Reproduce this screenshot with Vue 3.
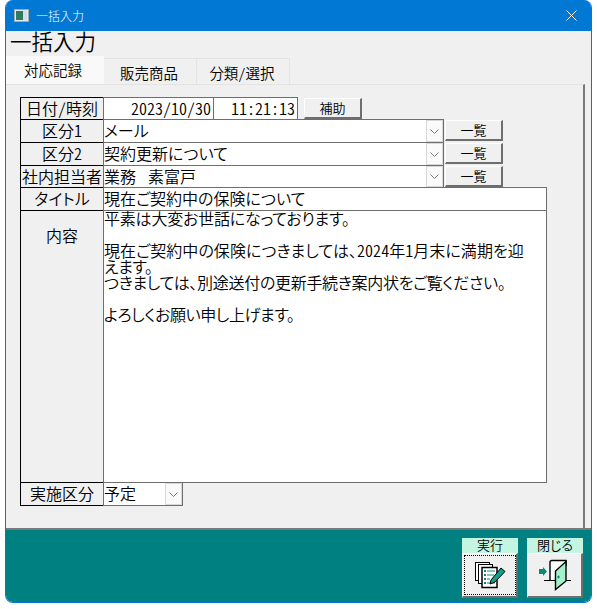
<script setup>
const lineRows = [
  { label: '区分1', value: 'メール' },
  { label: '区分2', value: '契約更新について' },
  { label: '社内担当者', value: '業務\u3000\u2005素富戸', short: true }
]
const body = [
  { text: '平素は大変お世話になっております。', spacing: -0.2 },
  { text: '\u00a0', spacing: 0 },
  { text: '現在ご契約中の保険につきましては、2024年1月末に満期を迎', spacing: 0.05 },
  { text: 'えます。', spacing: -0.4 },
  { text: 'つきましては、別途送付の更新手続き案内状をご覧ください。', spacing: -0.3 },
  { text: '\u00a0', spacing: 0 },
  { text: 'よろしくお願い申し上げます。', spacing: -0.4 }
]
</script>

<template>
  <div class="window">
    <header class="titlebar">
      <svg class="app-icon" width="15" height="13" viewBox="0 0 15 13">
        <rect x="0.5" y="0.5" width="14" height="12" fill="#e8e8e8" stroke="#a8a8a8" />
        <rect x="2" y="2" width="7" height="9" fill="#2f7a60" />
        <rect x="9" y="2" width="4" height="9" fill="#cfe0e8" />
      </svg>
      <span class="title-text">一括入力</span>
      <svg class="close" width="11" height="11" viewBox="0 0 11 11">
        <path d="M0.5 0.5 L10.5 10.5 M10.5 0.5 L0.5 10.5" stroke="#fff" stroke-width="1" fill="none" />
      </svg>
    </header>

    <main class="content">
      <h1 class="form-title">一括入力</h1>
      <div class="tabs">
        <div class="tab active">対応記録</div>
        <div class="tab">販売商品</div>
        <div class="tab">分類/選択</div>
      </div>

      <section class="panel">
        <div class="row short">
          <div class="label">日付/時刻</div>
          <div class="field half date">2023/10/30</div>
          <div class="field half time">11:21:13</div>
          <button class="btn help">補助</button>
        </div>

        <div v-for="row in lineRows" :key="row.label" class="row" :class="{ short: row.short }">
          <div class="label">{{ row.label }}</div>
          <div class="field combo">
            <span>{{ row.value }}</span>
            <span class="arrow">
              <svg width="9" height="5" viewBox="0 0 9 5"><path d="M0.5 0.5 L4.5 4.5 L8.5 0.5" fill="none" stroke="#777" /></svg>
            </span>
          </div>
          <button class="btn list">一覧</button>
        </div>

        <div class="row">
          <div class="label">タイトル</div>
          <div class="field wide">現在ご契約中の保険について</div>
        </div>

        <div class="row body-row">
          <div class="label body-label">内容</div>
          <div class="field wide body-text">
            <div class="body-lines">
              <div v-for="(line, i) in body" :key="i" :style="{ letterSpacing: line.spacing + 'px' }">{{ line.text }}</div>
            </div>
          </div>
        </div>

        <div class="row">
          <div class="label">実施区分</div>
          <div class="field combo status">
            <span>予定</span>
            <span class="arrow">
              <svg width="9" height="5" viewBox="0 0 9 5"><path d="M0.5 0.5 L4.5 4.5 L8.5 0.5" fill="none" stroke="#777" /></svg>
            </span>
          </div>
        </div>
      </section>
    </main>

    <footer class="footer">
      <div class="action">
        <div class="action-label">実行</div>
        <button class="action-btn">
          <span class="focus-ring">
            <svg width="32" height="28" viewBox="0 0 32 28">
              <rect x="1.5" y="1.5" width="14" height="18" fill="#fff" stroke="#000" />
              <rect x="4.5" y="3.5" width="14" height="19" fill="#fff" stroke="#000" />
              <rect x="8" y="6.5" width="15" height="20" fill="#fff" stroke="#000" stroke-width="1.5" />
              <path d="M10 10h2M10 14h2M10 18h2M10 22h2" stroke="#0a8a78" stroke-width="2" />
              <path d="M13 10h8M13 14h7M13 18h3M13 22h8" stroke="#0a8a78" stroke-width="1" />
              <path d="M17 19 L27 7 L31 10.5 L21 21 L16 23 Z" fill="#12a08c" stroke="#000" />
            </svg>
          </span>
        </button>
      </div>
      <div class="action">
        <div class="action-label">閉じる</div>
        <button class="action-btn">
          <svg width="34" height="34" viewBox="0 0 34 34">
            <path d="M1 11h4V9l4 4.5-4 4.5v-2H1z" fill="#0a8a78" />
            <path d="M6 22.5h27" stroke="#000" />
            <path d="M12 22.5V4.5q0-2 2-2H28V8" fill="#fff" stroke="#000" stroke-width="1.4" />
            <path d="M17.5 13 L28 3.5 V23 L17.5 31.5 Z" fill="#a5efcb" stroke="#000" stroke-width="1.4" />
            <path d="M19 19h3M20.5 17.5v3" stroke="#0a8a78" />
          </svg>
        </button>
      </div>
    </footer>
  </div>
</template>

<style scoped>
.window {
  width: 587px;
  height: 603px;
  margin-left: 5px;
  box-sizing: border-box;
  display: flex;
  flex-direction: column;
  background: #f0f0f0;
  border-left: 1px solid #0078d4;
  border-right: 1px solid #0078d4;
  border-bottom: 1px solid #0078d4;
  border-radius: 8px;
  overflow: hidden;
  color: #000;
  font-family: "Noto Sans CJK JP", "Liberation Sans", sans-serif;
  font-feature-settings: "palt", "hwid";
  font-weight: 350;
}
.titlebar {
  height: 31px;
  flex: none;
  margin: 0 -1px;
  padding: 0 15px 0 9px;
  display: flex;
  align-items: center;
  background: #0078d4;
  color: #fff;
}
.app-icon { margin-right: 7px; }
.title-text { font-size: 12px; flex: 1; font-weight: 300; }
.content {
  flex: 1;
  min-height: 0;
  display: flex;
  flex-direction: column;
  border-bottom: 2px solid #7a7a7a;
}
.form-title {
  margin: 0 0 0 4px;
  height: 25px;
  font-size: 21.5px;
  font-weight: 350;
  line-height: 19px;
}
.tabs {
  display: flex;
  align-items: flex-end;
  height: 28px;
  flex: none;
}
.tab {
  width: 93px;
  height: 26px;
  box-sizing: border-box;
  text-align: center;
  font-size: 14.5px;
  line-height: 28px;
  border: 1px solid #e3e3e3;
  border-bottom: none;
  border-left: none;
  padding-right: 2px;
}
.tab.active {
  width: 98px;
  height: 28px;
  line-height: 27px;
  background: #f9f9f9;
  border: none;
  padding-right: 4px;
}
.panel {
  flex: 1;
  margin-right: 6px;
  padding: 12px 0 0 14px;
  border-top: 1px solid #e3e3e3;
  border-right: 2px solid #7a7a7a;
}
.row {
  display: flex;
  height: 24px;
  margin-bottom: -1px;
}
.row > * { flex: none; }
.row.short { height: 23px; }
.row.body-row { height: 273px; }
.label {
  width: 84px;
  box-sizing: border-box;
  border: 1px solid #000;
  text-align: center;
  font-size: 16px;
  line-height: 20px;
  white-space: nowrap;
}
.body-label { padding-top: 14px; }
.field {
  margin-left: -1px;
  box-sizing: border-box;
  background: #fff;
  border: 1px solid #6e6e6e;
  font-size: 16px;
  line-height: 20px;
  white-space: nowrap;
}
.half {
  text-align: right;
  padding-right: 2px;
}
.date { width: 111px; }
.time { width: 85px; }
.combo {
  width: 341px;
  display: flex;
  justify-content: space-between;
}
.combo.status { width: 80px; }
.arrow {
  width: 17px;
  flex: none;
  display: flex;
  align-items: center;
  justify-content: center;
  background: #fafafa;
  border: 1px solid #d8d8d8;
  box-sizing: border-box;
}
.wide { width: 444px; }
.body-text {
  line-height: 16px;
}
.body-lines { margin-top: -1px; }
.btn {
  padding: 0;
  box-sizing: border-box;
  background: #f0f0f0;
  border-style: solid;
  border-width: 1px 2px 2px 1px;
  border-color: #fff #6e6e6e #6e6e6e #fff;
  color: #000;
  font-family: inherit;
  font-feature-settings: inherit;
  font-size: 13px;
  font-weight: 350;
  line-height: 16px;
}
.help { width: 58px; height: 21px; margin-left: 6px; margin-top: 1px; }
.list { width: 58px; height: 21px; margin-left: 1px; margin-top: 1px; }
.footer {
  height: 72px;
  flex: none;
  display: flex;
  justify-content: flex-end;
  gap: 9px;
  padding: 8px 8px 0 0;
  box-sizing: border-box;
  background: #008080;
}
.action { width: 56px; }
.action-label {
  height: 15px;
  background: #c4f5e0;
  text-align: center;
  font-size: 13px;
  line-height: 14px;
}
.action-btn {
  width: 56px;
  height: 45px;
  padding: 0;
  box-sizing: border-box;
  background: #f0f0f0;
  border-style: solid;
  border-width: 1px 2px 2px 1px;
  border-color: #fff #6e6e6e #6e6e6e #fff;
  display: flex;
  align-items: center;
  justify-content: center;
}
.focus-ring {
  width: 52px;
  height: 40px;
  box-sizing: border-box;
  border: 1px dotted #000;
  display: flex;
  align-items: center;
  justify-content: center;
}
</style>
